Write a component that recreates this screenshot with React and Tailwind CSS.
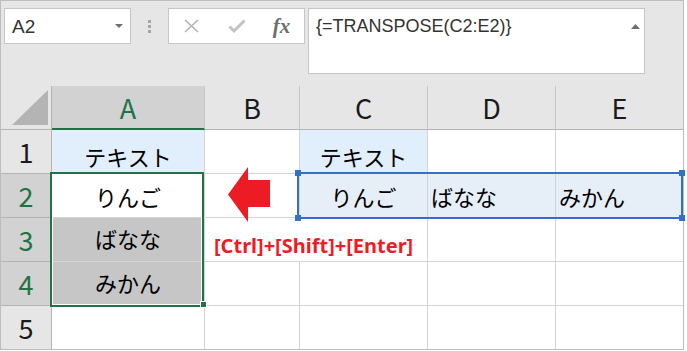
import React from "react";

const jp = "font-['Noto_Sans_CJK_JP','Noto_Sans_CJK_SC',sans-serif]";

function ColHead({ label, active, last }) {
  const right = last ? "" : "border-r border-r-[#c6c6c6]";
  const state = active
    ? "bg-[#d2d2d2] text-[#217346] border-b-2 border-b-[#217346]"
    : "bg-[#e6e6e6] text-[#1a1a1a] border-b border-b-[#b4b4b4]";
  return (
    <div className={`flex items-center justify-center text-[27px] leading-none ${right} ${state}`}>
      {label}
    </div>
  );
}

function RowHead({ n, active, last }) {
  const state = active ? "bg-[#d2d2d2] text-[#217346]" : "bg-[#e6e6e6] text-[#1a1a1a]";
  const bottom = last ? "" : "border-b border-b-[#b4b4b4]";
  return (
    <div className={`flex items-center justify-center text-[27px] leading-none border-r border-r-[#b4b4b4] ${bottom} ${state}`}>
      {n}
    </div>
  );
}

function Cell({ children, bg = "", right = true, bottom = true, left = false, extra = "" }) {
  const r = right ? "border-r border-r-[#d4d4d4]" : "";
  const b = bottom ? "border-b border-b-[#d4d4d4]" : "";
  const a = left ? "justify-start pl-[3px]" : "justify-center";
  return (
    <div className={`flex items-center ${a} text-[22px] leading-none text-black ${r} ${b} ${bg} ${extra}`}>
      {children}
    </div>
  );
}

export default function App() {
  return (
    <div className={`w-[687px] h-[351px] bg-white ${jp}`}>
      <div className="w-[684px] h-[350px] border border-[#bdbdbd] bg-white flex flex-col">
        {/* Formula bar area */}
        <div className="h-[85px] bg-[#e6e6e6] flex items-start pt-[7px] pl-[3px]">
          <div className="w-[127px] h-[36px] bg-white border border-[#c6c6c6] flex items-center justify-between pl-[7px] pr-[7px]">
            <span className="font-['Liberation_Sans',sans-serif] text-[19px] leading-none text-[#333]">A2</span>
            <svg width="8" height="4" className="block">
              <polygon points="0,0 8,0 4,4" fill="#6f6f6f" />
            </svg>
          </div>
          <div className="w-[37px] h-[36px] flex flex-col items-center justify-center gap-[2px]">
            <div className="w-[3px] h-[3px] bg-[#a6a6a6]" />
            <div className="w-[3px] h-[3px] bg-[#a6a6a6]" />
            <div className="w-[3px] h-[3px] bg-[#a6a6a6]" />
          </div>
          <div className="w-[137px] h-[36px] bg-white border border-[#c6c6c6] flex items-center">
            <div className="w-[45px] flex items-center justify-center">
              <svg width="15" height="14" className="block">
                <path d="M1 1 L14 13 M14 1 L1 13" stroke="#b3b3b3" strokeWidth="1.6" fill="none" />
              </svg>
            </div>
            <div className="w-[45px] flex items-center justify-center">
              <svg width="18" height="14" className="block">
                <path d="M1.5 7.5 L6 12 L16.5 1.5" stroke="#c2c2c2" strokeWidth="3" fill="none" />
              </svg>
            </div>
            <div className="w-[45px] flex items-center justify-center">
              <span className="font-['Liberation_Serif',serif] italic font-bold text-[21px] leading-none text-[#6e6e6e]">fx</span>
            </div>
          </div>
          <div className="ml-[3px] w-[337px] h-[66px] bg-white border border-[#c6c6c6] flex items-start justify-between pl-[7px] pr-[4px] pt-[7px]">
            <span className="font-['Liberation_Sans',sans-serif] text-[18px] leading-[20px] text-[#333]">
              {"{=TRANSPOSE(C2:E2)}"}
            </span>
            <svg width="9" height="5" className="block mt-[8px]">
              <polygon points="0,5 4.5,0 9,5" fill="#707070" />
            </svg>
          </div>
        </div>

        {/* Grid */}
        <div className="relative grid grid-cols-[51px_153px_95px_128px_128px_127px] grid-rows-[44px_44px_44px_44px_44px_43px]">
          {/* header row */}
          <div className="border-r border-r-[#b4b4b4] border-b border-b-[#b4b4b4] bg-[#e6e6e6]">
            <svg width="50" height="43" className="block">
              <polygon points="11,39 47,39 47,4" fill="#b4b4b4" />
            </svg>
          </div>
          <ColHead label="A" active />
          <ColHead label="B" />
          <ColHead label="C" />
          <ColHead label="D" />
          <ColHead label="E" last />

          {/* row 1 */}
          <RowHead n="1" />
          <Cell bg="bg-[#e1eefb]" extra="pt-[8px]">テキスト</Cell>
          <Cell />
          <Cell bg="bg-[#e1eefb]" extra="pt-[8px]">テキスト</Cell>
          <Cell />
          <Cell right={false} />

          {/* row 2 */}
          <RowHead n="2" active />
          <Cell>りんご</Cell>
          <Cell />
          <Cell bg="bg-[#e6eef8]">りんご</Cell>
          <Cell bg="bg-[#e6eef8]" left>ばなな</Cell>
          <Cell bg="bg-[#e6eef8]" left right={false}>みかん</Cell>

          {/* row 3 */}
          <RowHead n="3" active />
          <Cell bg="bg-[#c6c6c6]" extra="pb-[3px]">ばなな</Cell>
          <div className="relative z-10 flex items-center justify-start pl-[9px] pt-[12px] border-b border-b-[#d4d4d4] whitespace-nowrap">
            <span className="font-['Noto_Sans',sans-serif] font-bold text-[20px] leading-none text-[#ee1c25]">
              [Ctrl]+[Shift]+[Enter]
            </span>
          </div>
          <Cell />
          <Cell />
          <Cell right={false} />

          {/* row 4 */}
          <RowHead n="4" active />
          <Cell bg="bg-[#c6c6c6]" extra="pb-[3px]">みかん</Cell>
          <Cell />
          <Cell />
          <Cell />
          <Cell right={false} />

          {/* row 5 */}
          <RowHead n="5" last />
          <Cell bottom={false} />
          <Cell bottom={false} />
          <Cell bottom={false} />
          <Cell bottom={false} />
          <Cell bottom={false} right={false} />

          {/* red arrow overlay */}
          <svg width="42" height="56" className="absolute left-[227px] top-[81px] z-20">
            <polygon points="0,27.5 20,0 20,13 42,13 42,40 20,40 20,55" fill="#ed1c24" />
          </svg>

          {/* green selection A2:A4 */}
          <div className="absolute left-[49px] top-[86px] w-[154px] h-[135px] border-2 border-[#217346] shadow-[inset_0_0_0_1px_white] z-20" />
          <div className="absolute left-[199px] top-[215px] w-[7px] h-[7px] bg-[#217346] border border-white z-30" />

          {/* blue selection C2:E2 */}
          <div className="absolute left-[296px] top-[86px] w-[386px] h-[47px] border-2 border-[#3370c9] z-20" />
          <div className="absolute left-[294px] top-[84px] w-[6px] h-[6px] bg-[#3370c9] z-30" />
          <div className="absolute left-[678px] top-[84px] w-[6px] h-[6px] bg-[#3370c9] z-30" />
          <div className="absolute left-[294px] top-[129px] w-[6px] h-[6px] bg-[#3370c9] z-30" />
          <div className="absolute left-[678px] top-[129px] w-[6px] h-[6px] bg-[#3370c9] z-30" />
        </div>
      </div>
    </div>
  );
}
